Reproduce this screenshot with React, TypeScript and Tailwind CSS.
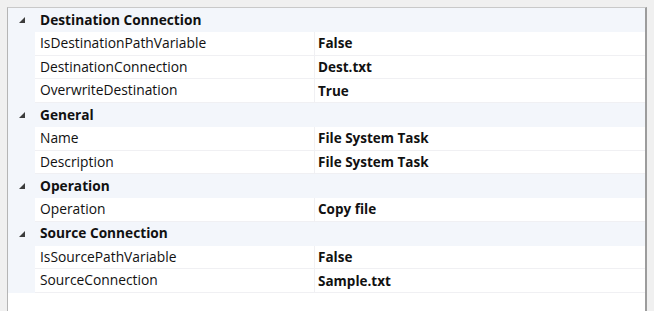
const groups = [
  {
    title: "Destination Connection",
    rows: [
      ["IsDestinationPathVariable", "False"],
      ["DestinationConnection", "Dest.txt"],
      ["OverwriteDestination", "True"],
    ],
  },
  {
    title: "General",
    rows: [
      ["Name", "File System Task"],
      ["Description", "File System Task"],
    ],
  },
  {
    title: "Operation",
    rows: [["Operation", "Copy file"]],
  },
  {
    title: "Source Connection",
    rows: [
      ["IsSourcePathVariable", "False"],
      ["SourceConnection", "Sample.txt"],
    ],
  },
]

function Expander() {
  return (
    <svg width="6" height="6" viewBox="0 0 6 6" className="block">
      <polygon points="6,0 6,6 0,6" fill="#3c3c3c" />
    </svg>
  )
}

export default function App() {
  return (
    <div
      className="w-[654px] h-[311px] bg-[#f0f0f0] pl-[7px] pr-[7px] pt-[7px] overflow-hidden text-[13.5px] text-[#111]"
      style={{ fontFamily: '"Open Sans", "Noto Sans", sans-serif' }}
    >
      <div className="h-[320px] bg-white border-t border-l border-t-[#c9c9c9] border-l-[#b5b5b5] border-r-2 border-r-[#9c9c9c] flex flex-col">
        {groups.map((g) => (
          <div key={g.title} className="flex flex-col">
            {/* category header */}
            <div className="flex h-[23.75px] items-center bg-[#f3f6fb]">
              <div className="w-[27px] flex justify-center pl-[1px]">
                <Expander />
              </div>
              <div className="pl-[5px] font-bold text-[13.7px]">{g.title}</div>
            </div>
            {g.rows.map(([name, value]) => (
              <div key={name} className="flex h-[23.75px]">
                <div className="w-[27px] bg-[#f3f6fb]" />
                <div className="flex flex-1 bg-white border-b border-[#f0f0f3]">
                  <div className="w-[280px] flex items-center pl-[5px] border-r border-[#f0f0f3] text-[13.8px]">{name}</div>
                  <div className="flex items-center pl-[3px] font-bold">{value}</div>
                </div>
              </div>
            ))}
          </div>
        ))}
      </div>
    </div>
  )
}
